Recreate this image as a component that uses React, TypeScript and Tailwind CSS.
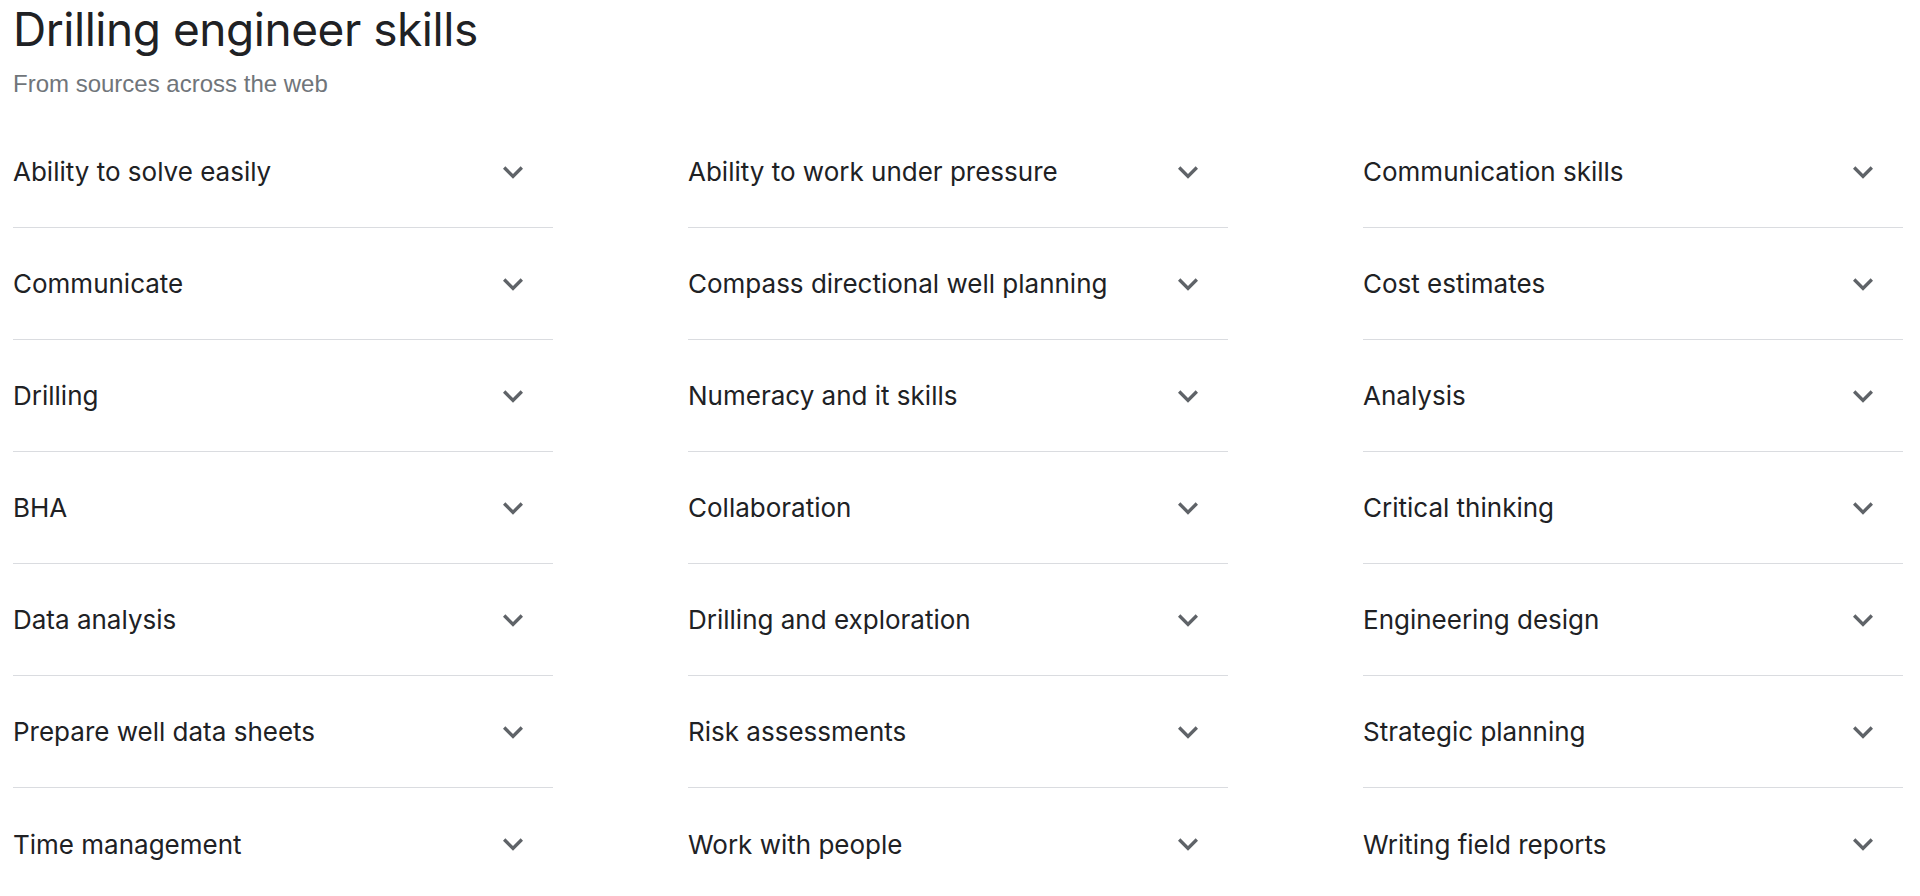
const columns = [
  ['Ability to solve easily', 'Communicate', 'Drilling', 'BHA', 'Data analysis', 'Prepare well data sheets', 'Time management'],
  [
    'Ability to work under pressure',
    'Compass directional well planning',
    'Numeracy and it skills',
    'Collaboration',
    'Drilling and exploration',
    'Risk assessments',
    'Work with people',
  ],
  [
    'Communication skills',
    'Cost estimates',
    'Analysis',
    'Critical thinking',
    'Engineering design',
    'Strategic planning',
    'Writing field reports',
  ],
];

function Chevron() {
  return (
    <svg viewBox="0 0 24 24" className="w-10 h-10 fill-[#5f6368] shrink-0">
      <path d="M16.59 8.59L12 13.17 7.41 8.59 6 10l6 6 6-6z" />
    </svg>
  );
}

export default function App() {
  return (
    <div className="min-h-screen bg-white pl-[13px] pr-[17px] overflow-hidden">
      {/* Header */}
      <h1
        className="text-[#202124] text-[46px] leading-[56px] pt-px tracking-[-0.01em]"
        style={{ fontFamily: 'Inter, "Noto Sans", sans-serif' }}
      >
        Drilling engineer skills
      </h1>
      <p
        className="text-[#70757a] text-[24px] leading-[28px] mt-[13px]"
        style={{ fontFamily: '"Liberation Sans", Arial, sans-serif' }}
      >
        From sources across the web
      </p>

      {/* Skill list */}
      <div className="grid grid-cols-3 gap-x-[135px] mt-[18px]">
        {columns.map((col, i) => (
          <div key={i}>
            {col.map((skill, j) => (
              <div
                key={j}
                className={
                  'flex items-center justify-between h-[112px] pr-5 ' +
                  (j < col.length - 1 ? 'border-b border-[#dadce0]' : '')
                }
              >
                <span
                  className="text-[#202124] text-[26px]"
                  style={{ fontFamily: 'Inter, "Noto Sans", sans-serif' }}
                >
                  {skill}
                </span>
                <Chevron />
              </div>
            ))}
          </div>
        ))}
      </div>
    </div>
  );
}
